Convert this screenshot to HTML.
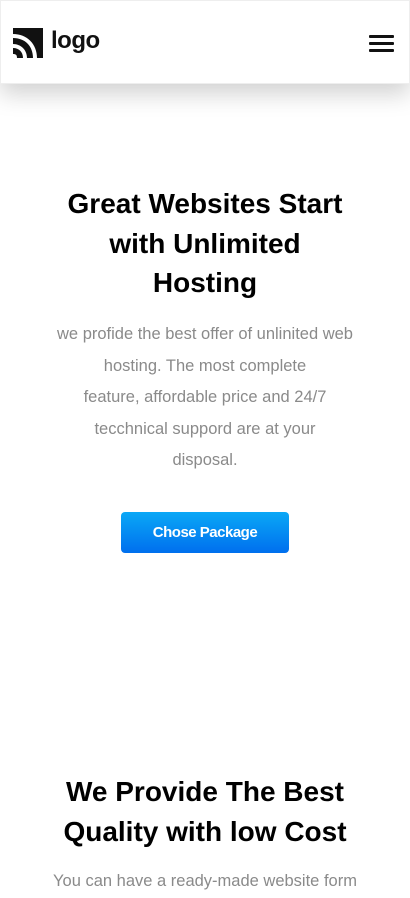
<!DOCTYPE html>
<html><head><style>
*{margin:0;padding:0;box-sizing:border-box}
body{width:410px;height:887px;overflow:hidden;background:#fff;font-family:"Liberation Sans",sans-serif;position:relative}
.hdr{position:absolute;left:0;top:0;width:410px;height:84px;background:#fff;border:1px solid #eee;box-shadow:0 10px 22px rgba(0,0,0,.18)}
.logo{position:absolute;left:50px;top:26px;font-size:24px;font-weight:bold;color:#111;letter-spacing:-.5px}
.ham{position:absolute;left:368px;width:25px;height:3px;background:#111;border-radius:1px}
h1,h2{position:absolute;left:0;width:410px;text-align:center;font-weight:bold;color:#000;font-size:28px;line-height:39.5px}
p{position:absolute;left:0;width:410px;text-align:center;color:#8a8a8a;font-size:16.5px;line-height:31.5px}
.btn{position:absolute;left:121px;top:512px;width:168px;height:41px;border-radius:4px;background:linear-gradient(#0aa8f6,#006fee);color:#fff;font-size:15px;font-weight:bold;text-align:center;line-height:41px;letter-spacing:-.5px}
</style></head><body>
<div class="hdr">
<svg style="position:absolute;left:12px;top:27px" width="30" height="30" viewBox="0 0 30 30">
<path d="M0 0 H30 V30 H24 C24 16 14 6 0 6 Z" fill="#111"/>
<path d="M0 10 C12 10 20 18 20 30 H14 C14 22 8 16 0 16Z" fill="#111"/>
<path d="M0 20 C6 20 10 24 10 30 H4 C4 27 3 26 0 26Z" fill="#111"/>
</svg>
<div class="logo">logo</div>
<div class="ham" style="top:34px"></div><div class="ham" style="top:41px"></div><div class="ham" style="top:48px"></div>
</div>
<h1 style="top:184px">Great Websites Start<br>with Unlimited<br>Hosting</h1>
<p style="top:319px">we profide the best offer of unlinited web<br>hosting. The most complete<br>feature, affordable price and 24/7<br>tecchnical suppord are at your<br>disposal.</p>
<div class="btn">Chose Package</div>
<h2 style="top:772px">We Provide The Best<br>Quality with low Cost</h2>
<p style="top:866px">You can have a ready-made website form</p>
</body></html>
